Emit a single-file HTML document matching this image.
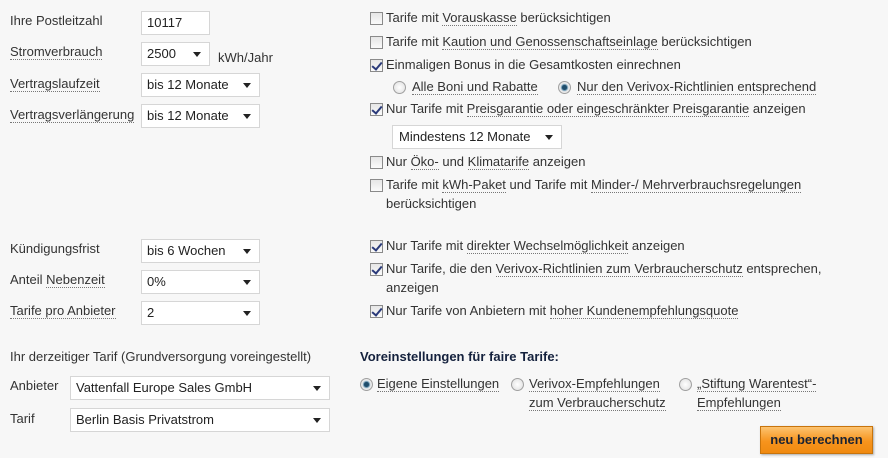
<!DOCTYPE html>
<html><head><meta charset="utf-8"><style>
*{margin:0;padding:0;box-sizing:border-box}
body{width:888px;height:458px;background:#f7f7f7;font-family:"Liberation Sans",sans-serif;font-size:13px;color:#333;position:relative;overflow:hidden}
.t{position:absolute;white-space:nowrap;line-height:18px}
.u{border-bottom:1px dotted #777}
.f{position:absolute;background:#fff;border:1px solid #d6d6d6;height:24px;line-height:22px;padding-left:5px;color:#222}
.f.s::after{content:"";position:absolute;right:8px;top:9px;border-left:4px solid transparent;border-right:4px solid transparent;border-top:5px solid #222}
.cb{position:absolute;width:13px;height:13px;border:1px solid #8a8a8a;background:linear-gradient(#e6e6e6,#fafafa)}
.cb.c::after{content:"";position:absolute;left:3px;top:0px;width:4px;height:8px;border:solid #2a3a7a;border-width:0 2px 2px 0;transform:rotate(40deg)}
.rd{position:absolute;width:13px;height:13px;border-radius:50%;border:1px solid #a0a0a0;background:radial-gradient(#fff,#ddd)}
.rd.c::after{content:"";position:absolute;left:3px;top:3px;width:5px;height:5px;border-radius:50%;background:#1f4d6b;box-shadow:0 0 1px 1px #5a8aa8}
.btn{position:absolute;left:760px;top:426px;width:113px;height:28px;border:1px solid #c8740c;background:linear-gradient(#fcc370,#f7941d 55%,#f08a10);font-weight:bold;color:#1a2333;text-align:center;line-height:26px;font-size:13px;box-shadow:1px 1px 2px #aaa}
</style></head><body>
<div class="t" style="left:10px;top:12px">Ihre Postleitzahl</div>
<div class="f" style="left:141px;top:11px;width:69px">10117</div>
<div class="t" style="left:10px;top:43px"><span class="u">Stromverbrauch</span></div>
<div class="f s" style="left:141px;top:42px;width:69px">2500</div>
<div class="t" style="left:218px;top:49px">kWh/Jahr</div>
<div class="t" style="left:10px;top:75px"><span class="u">Vertragslaufzeit</span></div>
<div class="f s" style="left:141px;top:73px;width:119px">bis 12 Monate</div>
<div class="t" style="left:10px;top:106px"><span class="u">Vertragsverlängerung</span></div>
<div class="f s" style="left:141px;top:104px;width:119px">bis 12 Monate</div>

<div class="t" style="left:10px;top:240px">Kündigungsfrist</div>
<div class="f s" style="left:141px;top:239px;width:119px">bis 6 Wochen</div>
<div class="t" style="left:10px;top:271px">Anteil <span class="u">Nebenzeit</span></div>
<div class="f s" style="left:141px;top:270px;width:119px">0%</div>
<div class="t" style="left:10px;top:302px"><span class="u">Tarife pro Anbieter</span></div>
<div class="f s" style="left:141px;top:301px;width:119px">2</div>

<div class="t" style="left:10px;top:348px">Ihr derzeitiger Tarif (Grundversorgung voreingestellt)</div>
<div class="t" style="left:10px;top:377px">Anbieter</div>
<div class="f s" style="left:70px;top:376px;width:260px">Vattenfall Europe Sales GmbH</div>
<div class="t" style="left:10px;top:410px">Tarif</div>
<div class="f s" style="left:70px;top:408px;width:260px">Berlin Basis Privatstrom</div>

<div class="cb" style="left:370px;top:12px"></div>
<div class="t" style="left:386px;top:9px">Tarife mit <span class="u">Vorauskasse</span> berücksichtigen</div>
<div class="cb" style="left:370px;top:36px"></div>
<div class="t" style="left:386px;top:33px">Tarife mit <span class="u">Kaution und Genossenschaftseinlage</span> berücksichtigen</div>
<div class="cb c" style="left:370px;top:59px"></div>
<div class="t" style="left:386px;top:56px">Einmaligen Bonus in die Gesamtkosten einrechnen</div>
<div class="rd" style="left:393px;top:81px"></div>
<div class="t" style="left:412px;top:78px"><span class="u">Alle Boni und Rabatte</span></div>
<div class="rd c" style="left:558px;top:81px"></div>
<div class="t" style="left:577px;top:78px"><span class="u">Nur den Verivox-Richtlinien entsprechend</span></div>
<div class="cb c" style="left:370px;top:103px"></div>
<div class="t" style="left:386px;top:100px">Nur Tarife mit <span class="u">Preisgarantie oder eingeschränkter Preisgarantie</span> anzeigen</div>
<div class="f s" style="left:392px;top:125px;width:170px;padding-left:6px">Mindestens 12 Monate</div>
<div class="cb" style="left:370px;top:156px"></div>
<div class="t" style="left:386px;top:153px">Nur <span class="u">Öko-</span> und <span class="u">Klimatarife</span> anzeigen</div>
<div class="cb" style="left:370px;top:179px"></div>
<div class="t" style="left:386px;top:176px">Tarife mit <span class="u">kWh-Paket</span> und Tarife mit <span class="u">Minder-/ Mehrverbrauchsregelungen</span></div>
<div class="t" style="left:386px;top:195px">berücksichtigen</div>

<div class="cb c" style="left:370px;top:240px"></div>
<div class="t" style="left:386px;top:237px">Nur Tarife mit <span class="u">direkter Wechselmöglichkeit</span> anzeigen</div>
<div class="cb c" style="left:370px;top:263px"></div>
<div class="t" style="left:386px;top:260px">Nur Tarife, die den <span class="u">Verivox-Richtlinien zum Verbraucherschutz</span> entsprechen,</div>
<div class="t" style="left:386px;top:279px">anzeigen</div>
<div class="cb c" style="left:370px;top:305px"></div>
<div class="t" style="left:386px;top:302px">Nur Tarife von Anbietern mit <span class="u">hoher Kundenempfehlungsquote</span></div>

<div class="t" style="left:360px;top:348px;font-weight:bold;color:#14213d">Voreinstellungen für faire Tarife:</div>
<div class="rd c" style="left:360px;top:378px"></div>
<div class="t" style="left:377px;top:375px"><span class="u">Eigene Einstellungen</span></div>
<div class="rd" style="left:511px;top:378px"></div>
<div class="t" style="left:529px;top:375px"><span class="u">Verivox-Empfehlungen</span></div>
<div class="t" style="left:529px;top:394px"><span class="u">zum Verbraucherschutz</span></div>
<div class="rd" style="left:679px;top:378px"></div>
<div class="t" style="left:697px;top:375px"><span class="u">„Stiftung Warentest“-</span></div>
<div class="t" style="left:697px;top:394px"><span class="u">Empfehlungen</span></div>
<div class="btn">neu berechnen</div>
</body></html>
